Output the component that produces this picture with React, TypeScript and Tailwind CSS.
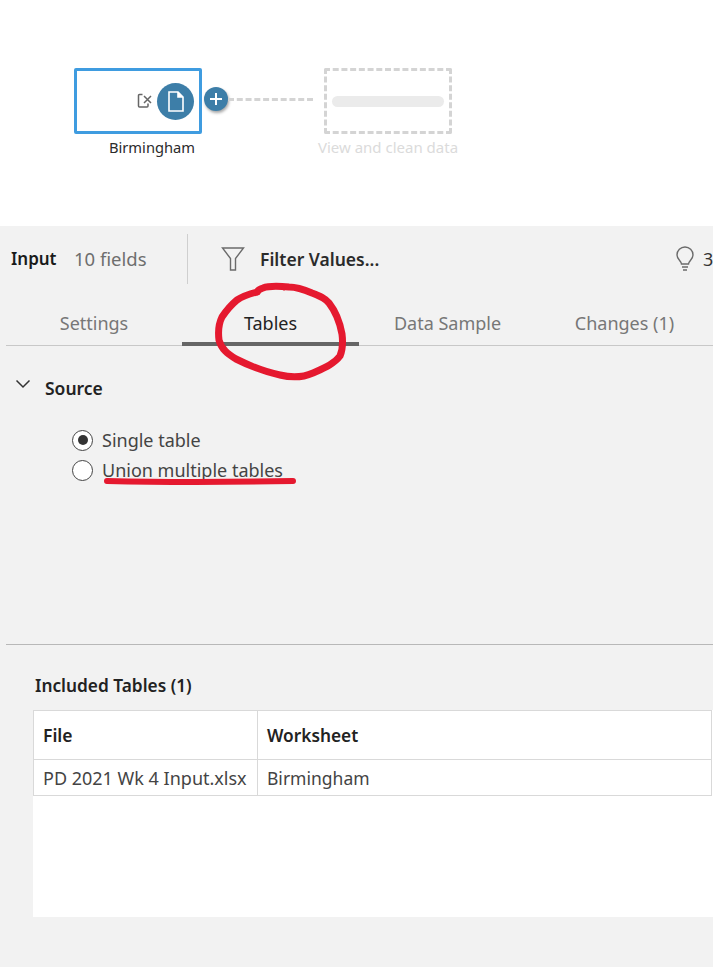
const font = "font-['Noto_Sans','Open_Sans',sans-serif]";

function FlowCanvas() {
  return (
    <div className="relative h-[226px] bg-white">
      <div className="flex pl-[74px] pt-[68px]">
        <div className="flex flex-col items-center">
          <div className="flex h-[66px] w-[128px] items-center justify-end gap-[4px] rounded-[2px] border-[3px] border-[#3f9ce0] pr-[5px]">
            <svg width="16" height="16" viewBox="0 0 16 16" fill="none" stroke="#666" strokeWidth="1.500">
              <path d="M5.500 1.500H2.500a1 1 0 0 0-1 1V13a1 1 0 0 0 1 1H10a1 1 0 0 0 1-1v-2.500" />
              <path d="M7 3l7 7M14 3l-7 7" />
            </svg>
            <div className="flex h-[37px] w-[37px] items-center justify-center rounded-full bg-[#3d7ea8]">
              <svg width="16" height="21" viewBox="0 0 16 21" fill="none" stroke="white" strokeWidth="1.6">
                <path d="M1 1h9L15 6v14H1z" />
                <path d="M10 1v5h5" fill="white" />
              </svg>
            </div>
          </div>
          <span className="mt-[3px] ml-[28px] text-[14.700px] leading-[20px] text-[#2b2b2b]">Birmingham</span>
        </div>
        <div className="mt-[19px] ml-[2px] flex h-[24px] w-[24px] items-center justify-center rounded-full bg-[#3d7ea8] shadow-[1px_2px_3px_rgba(0,0,0,0.35)]">
          <svg width="14" height="14" viewBox="0 0 14 14" stroke="white" strokeWidth="2">
            <path d="M7 1v12M1 7h12" />
          </svg>
        </div>
        <div className="mt-[30px] h-0 w-[85px] border-t-[3px] border-dashed border-[#d4d4d4]" />
        <div className="ml-[11px] flex w-[128px] flex-col items-center">
          <div className="flex h-[66px] w-[128px] shrink-0 items-center justify-center rounded-[2px] border-[3px] border-dashed border-[#d4d4d4]">
            <div className="h-[11px] w-[112px] rounded-full bg-[#ebebeb]" />
          </div>
          <span className="mt-[3px] whitespace-nowrap text-[15px] leading-[20px] text-[#dbdbdb]">View and clean data</span>
        </div>
      </div>
    </div>
  );
}

function Toolbar() {
  return (
    <div className="flex h-[65px] items-center pt-[1px] pl-[11px]">
      <span className="w-[63px] text-[17px] font-semibold text-[#1a1a1a]">Input</span>
      <span className="w-[113px] text-[18.500px] text-[#6e6e6e]">10 fields</span>
      <div className="h-[50px] w-px bg-[#cfcfcf]" />
      <svg className="ml-[33px]" width="24" height="26" viewBox="0 0 24 26" fill="none" stroke="#6b6b6b" strokeWidth="1.4">
        <path d="M1.500 2h21l-8 10.500V24h-5V12.500z" />
      </svg>
      <span className="ml-[15px] text-[17.500px] font-semibold text-[#2b2b2b]">Filter Values...</span>
      <svg className="ml-auto mr-[8px]" width="20" height="26" viewBox="0 0 20 26" fill="none" stroke="#6b6b6b" strokeWidth="1.4">
        <path d="M6.500 18c0-3-4.500-4.500-4.500-9a8 8 0 0 1 16 0c0 4.500-4.500 6-4.500 9z" />
        <path d="M7 21h6M8 24h4" />
      </svg>
      <span className="w-[10px] overflow-hidden text-[18px] text-[#333]">3</span>
    </div>
  );
}

function Tabs() {
  const tabs = [
    { label: 'Settings', w: 'w-[176px]', active: false },
    { label: 'Tables', w: 'w-[177px]', active: true },
    { label: 'Data Sample', w: 'w-[177px]', active: false },
    { label: 'Changes (1)', w: 'w-[177px]', active: false },
  ];
  return (
    <div className="ml-[6px] flex h-[55px] border-b border-[#c8c8c8]">
      {tabs.map((t) => (
        <div
          key={t.label}
          className={`${t.w} flex h-[55px] shrink-0 items-center justify-center border-b-[4px] pt-[13px] text-[18px] ${
            t.active ? 'border-[#666] text-[#222]' : 'border-transparent text-[#777]'
          }`}
        >
          {t.label}
        </div>
      ))}
    </div>
  );
}

function Radio({ label, checked }: { label: string; checked?: boolean }) {
  return (
    <div className="flex h-[30px] items-center gap-[9px]">
      <div className="flex h-[21px] w-[21px] items-center justify-center rounded-full border-[1.5px] border-[#444] bg-white">
        {checked && <div className="h-[10px] w-[10px] rounded-full bg-[#333]" />}
      </div>
      <span className="text-[18px] text-[#444]">{label}</span>
    </div>
  );
}

function IncludedTables() {
  return (
    <div className="pl-[33px]">
      <div className="mb-[12px] pl-[2px] text-[17.300px] leading-[24px] font-semibold text-[#222]">Included Tables (1)</div>
      <div className="h-[207px] bg-white">
        <div className="grid w-[679px] grid-cols-[224px_1fr] border border-[#d9d9d9] text-[#222]">
          <div className="flex h-[49px] items-center border-r border-b border-[#d9d9d9] pt-[1px] pl-[9px] text-[17.500px] font-semibold">File</div>
          <div className="flex h-[49px] items-center border-b border-[#d9d9d9] pt-[1px] pl-[9px] text-[17.300px] font-semibold">Worksheet</div>
          <div className="flex h-[35px] items-center border-r border-[#d9d9d9] pt-[1px] pl-[9px] text-[18px] whitespace-nowrap text-[#444]">PD 2021 Wk 4 Input.xlsx</div>
          <div className="flex h-[35px] items-center pt-[1px] pl-[9px] text-[17.500px] text-[#444]">Birmingham</div>
        </div>
      </div>
    </div>
  );
}

export default function App() {
  return (
    <div className={`${font} relative h-[967px] w-[713px] overflow-hidden bg-[#f2f2f2]`}>
      <FlowCanvas />
      <Toolbar />
      <Tabs />
      <div className="ml-[6px] h-[299px] border-b border-[#b8b8b8]">
        <div className="flex items-center pt-[29px] pl-[9px]">
          <svg width="16" height="10" viewBox="0 0 16 10" fill="none" stroke="#333" strokeWidth="1.5" className="mb-[8px]">
            <path d="M1.500 1.500L8 8l6.500-6.500" />
          </svg>
          <span className="ml-[14px] text-[17.500px] leading-[26px] font-semibold text-[#222]">Source</span>
        </div>
        <div className="flex flex-col pt-[24px] pl-[66px]">
          <Radio label="Single table" checked />
          <Radio label="Union multiple tables" />
        </div>
      </div>
      <div className="pt-[29px]">
        <IncludedTables />
      </div>
      {/* Hand-drawn annotations on top of the screenshot */}
      <svg className="absolute top-0 left-0" width="713" height="967" fill="none" stroke="#e5192f" strokeLinecap="round" strokeLinejoin="round">
        <path
          strokeWidth="7"
          d="M257 292C249 294 243 296 237 300C231 305 226 311 222 317C219 323 218 332 219 340C221 349 228 354 236 359C250 366 265 372 280 375C292 378 304 377 313 373C324 368 334 364 340 356C343 349 343 342 342 334C340 323 336 312 329 303C325 298 320 296 312 293C305 290 297 287 289 287C279 286 268 286 263 288C260 289 258 290 257 292"
        />
        <path strokeWidth="3" d="M258 291l1 2M283 288l1 1" />
        <path strokeWidth="6" d="M107 481C150 482 240 482 293 481" />
      </svg>
    </div>
  );
}
